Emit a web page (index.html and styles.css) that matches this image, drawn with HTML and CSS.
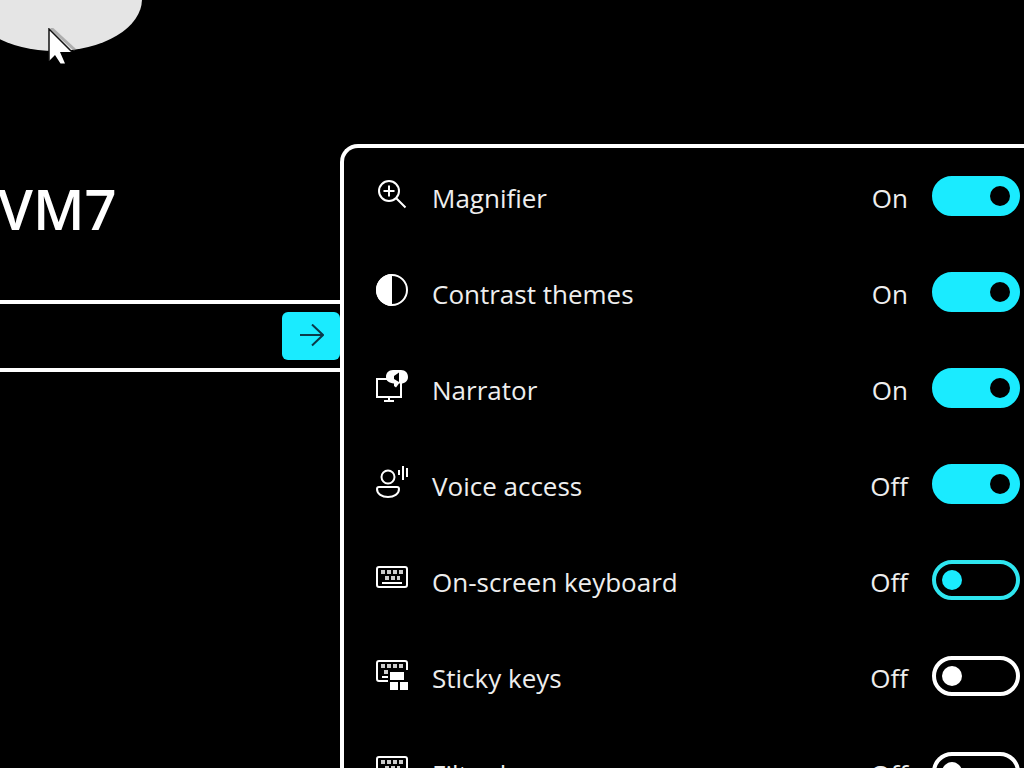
FILE: index.html
```html
<!DOCTYPE html>
<html lang="en">
<head>
    <meta charset="UTF-8">
    <meta name="viewport" content="width=device-width, initial-scale=1">
    <title>Sign in</title>
    <link rel="stylesheet" href="styles.css">
</head>
<body>
<main class="screen">
    <section class="login">
        <div class="avatar">
            <svg class="avatar-shape" viewBox="0 0 144 56" aria-hidden="true">
                <ellipse cx="55" cy="-1" rx="87" ry="52" fill="#e5e5e5"/>
            </svg>
            <svg class="cursor" viewBox="0 0 30 38" aria-hidden="true">
                <path d="M3 0 27 22" fill="none" stroke="#777" stroke-width="3" opacity=".5"/>
                <path d="M1 1V33L7 27 12.500 35.500H17L12 24H24Z" fill="#fff"/>
                <path d="M1 33V1L24 24" fill="none" stroke="#111" stroke-width="1.500"/>
            </svg>
        </div>
        <h1 class="user">VM7</h1>
        <form class="password" onsubmit="return false">
            <input class="password-input" type="password" aria-label="Password">
            <button class="submit" type="submit" aria-label="Sign in">
                <svg viewBox="0 0 26 24" width="26" height="24" aria-hidden="true">
                    <path d="M2 11H25M14 .500 25 11 14 21.500" fill="none" stroke="#0b3a4a" stroke-width="2"/>
                </svg>
            </button>
        </form>
    </section>

    <section class="panel" aria-label="Accessibility">
        <div class="row">
            <svg class="icon" viewBox="0 0 32 32" aria-hidden="true">
                <g fill="none" stroke="#fff" stroke-width="2">
                    <circle cx="13" cy="13" r="10"/>
                    <path d="M13 7.500V18.500M7.500 13H18.500M20 20 29.500 29.500"/>
                </g>
            </svg>
            <label class="name" for="magnifier">Magnifier</label>
            <span class="state">On</span>
            <input class="toggle" type="checkbox" id="magnifier" checked>
        </div>
        <div class="row">
            <svg class="icon" viewBox="0 0 32 32" aria-hidden="true">
                <circle cx="16" cy="16" r="15" fill="none" stroke="#fff" stroke-width="2"/>
                <path d="M16 0A16 16 0 0 0 16 32Z" fill="#fff"/>
            </svg>
            <label class="name" for="contrast">Contrast themes</label>
            <span class="state">On</span>
            <input class="toggle" type="checkbox" id="contrast" checked>
        </div>
        <div class="row">
            <svg class="icon" viewBox="0 0 32 32" aria-hidden="true">
                <path d="M1 9H25V27H1Z" fill="none" stroke="#fff" stroke-width="2"/>
                <path d="M13 28V31M8 31H18" stroke="#fff" stroke-width="2"/>
                <path d="M17 0H25C29.500 0 32 3 32 7C32 11 29 13.500 25 13.500H23L20 17.500 18 16V13.500C13 13 10 11 10 7C10 3 12.500 0 17 0Z" fill="#fff"/>
                <path d="M18 6 23 2.500V12L18 9Z" fill="#000"/>
            </svg>
            <label class="name" for="narrator">Narrator</label>
            <span class="state">On</span>
            <input class="toggle" type="checkbox" id="narrator" checked>
        </div>
        <div class="row">
            <svg class="icon" viewBox="0 0 32 32" aria-hidden="true">
                <g fill="none" stroke="#fff" stroke-width="2">
                    <circle cx="12" cy="11" r="6.500"/>
                    <path d="M3 21H21Q23 21 23 23C23 28 18 31 12 31S1 28 1 23Q1 21 3 21Z"/>
                    <path d="M23 4V9M27 0V14M31 2V11"/>
                </g>
            </svg>
            <label class="name" for="voice">Voice access</label>
            <span class="state">Off</span>
            <input class="toggle" type="checkbox" id="voice" checked>
        </div>
        <div class="row">
            <svg class="icon" viewBox="0 0 32 32" aria-hidden="true">
                <rect x="1" y="5" width="30" height="20" rx="2" fill="none" stroke="#fff" stroke-width="2"/>
                <path d="M5 10H27" stroke="#ccc" stroke-width="4" stroke-dasharray="4 2"/>
                <path d="M9 16H24" stroke="#ccc" stroke-width="4" stroke-dasharray="4 2"/>
                <path d="M6 21H26" stroke="#fff" stroke-width="2"/>
            </svg>
            <label class="name" for="keyboard">On-screen keyboard</label>
            <span class="state">Off</span>
            <input class="toggle toggle-accent" type="checkbox" id="keyboard">
        </div>
        <div class="row">
            <svg class="icon" viewBox="0 0 32 32" aria-hidden="true">
                <path d="M31 12V5Q31 3 29 3H3Q1 3 1 5V21Q1 23 3 23H12" fill="none" stroke="#fff" stroke-width="2"/>
                <path d="M5 8H27" stroke="#ccc" stroke-width="4" stroke-dasharray="4 2"/>
                <path d="M8 14H12" stroke="#ccc" stroke-width="4"/>
                <path d="M6 19H12" stroke="#fff" stroke-width="2"/>
                <path d="M14 14H28V22H14ZM14 24H22V32H14ZM24 24H32V32H24Z" fill="#fff"/>
            </svg>
            <label class="name" for="sticky">Sticky keys</label>
            <span class="state">Off</span>
            <input class="toggle" type="checkbox" id="sticky">
        </div>
        <div class="row">
            <svg class="icon" viewBox="0 0 32 32" aria-hidden="true">
                <rect x="1" y="3" width="30" height="20" rx="2" fill="none" stroke="#fff" stroke-width="2"/>
                <path d="M5 8H27" stroke="#ccc" stroke-width="4" stroke-dasharray="4 2"/>
                <path d="M9 14H24" stroke="#ccc" stroke-width="4" stroke-dasharray="4 2"/>
                <path d="M6 19H26" stroke="#fff" stroke-width="2"/>
            </svg>
            <label class="name" for="filter">Filter keys</label>
            <span class="state">Off</span>
            <input class="toggle" type="checkbox" id="filter">
        </div>
    </section>
</main>
</body>
</html>
```

FILE: styles.css
```css
* {
    box-sizing: border-box;
}
body {
    margin: 0;
    background: #000;
    color: #fff;
    font-family: "Open Sans", "Noto Sans", sans-serif;
    overflow: hidden;
}
.screen {
    display: grid;
    grid-template-columns: 340px 1fr;
    height: 100vh;
}
.avatar {
    position: relative;
    height: 56px;
}
.avatar-shape {
    display: block;
    width: 144px;
    height: 56px;
}
/* mouse pointer over the avatar */
.cursor {
    position: absolute;
    left: 48px;
    top: 28px;
    width: 30px;
    height: 38px;
}
.user {
    margin: 114px 0 54px -2px;
    font-size: 56px;
    font-weight: 600;
    line-height: 76px;
}
.password {
    display: flex;
    align-items: center;
    height: 72px;
    border-top: 4px solid #fff;
    border-bottom: 4px solid #fff;
}
.password-input {
    flex: 1;
    min-width: 0;
    height: 48px;
    padding: 0 16px;
    border: 0;
    background: #000;
    color: #fff;
    font: inherit;
    font-size: 28px;
    outline: none;
}
.submit {
    display: flex;
    align-items: center;
    justify-content: center;
    width: 58px;
    height: 48px;
    padding: 0;
    border: 0;
    border-radius: 6px;
    background: #1aebff;
    cursor: pointer;
}
.panel {
    margin-top: 144px;
    padding-left: 32px;
    padding-right: 4px;
    border-top: 4px solid #fff;
    border-left: 4px solid #fff;
    border-top-left-radius: 18px;
}
.row {
    display: flex;
    align-items: center;
    gap: 24px;
    height: 96px;
}
.icon {
    flex: none;
    width: 32px;
    height: 32px;
    margin-bottom: 4px;
}
.name {
    flex: 1;
}
.name, .state {
    padding-top: 4px;
    color: #eee;
    font-size: 26px;
    line-height: 36px;
}
.toggle {
    appearance: none;
    display: flex;
    align-items: center;
    width: 88px;
    height: 40px;
    margin: 0;
    padding: 0 6px;
    border: 4px solid #fff;
    border-radius: 20px;
    color: #fff;
    cursor: pointer;
}
.toggle::before {
    content: "";
    width: 20px;
    height: 20px;
    border-radius: 50%;
    background: currentColor;
}
.toggle:checked {
    justify-content: flex-end;
    border-color: #1aebff;
    background: #1aebff;
    color: #000;
}
.toggle-accent {
    border-color: #2ee6f0;
    color: #1aebff;
}
```
